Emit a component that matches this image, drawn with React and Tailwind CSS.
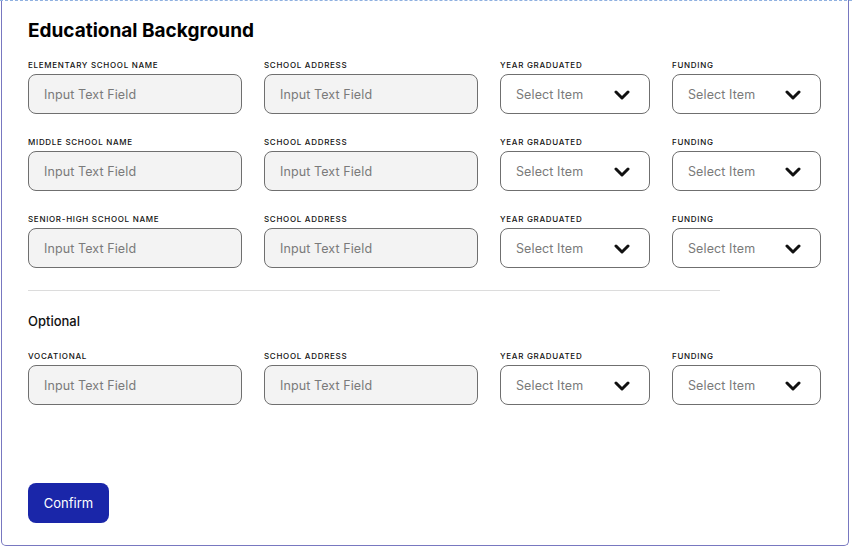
import React from "react";

const font = { fontFamily: "Inter, 'Liberation Sans', sans-serif" };

function Label({ children }) {
  return (
    <div className="h-[10px] text-[8px] leading-[10px] font-medium uppercase tracking-[0.7px] text-[#111] mb-[4px]">
      {children}
    </div>
  );
}

function TextInput({ label }) {
  return (
    <div>
      <Label>{label}</Label>
      <div className="h-[40px] rounded-[8px] border border-[#6f6f6f] bg-[#f3f3f3] flex items-center pl-[15px] pt-[2px] text-[12.5px] text-[#7a7a7a] tracking-[0.1px]">
        Input Text Field
      </div>
    </div>
  );
}

function Chevron() {
  return (
    <svg width="16" height="10" viewBox="0 0 16 10" fill="none">
      <path d="M2 2 L8 8 L14 2" stroke="#111" strokeWidth="3" strokeLinecap="round" strokeLinejoin="round" />
    </svg>
  );
}

function SelectInput({ label }) {
  return (
    <div>
      <Label>{label}</Label>
      <div className="h-[40px] rounded-[8px] border border-[#6f6f6f] bg-white flex items-center justify-between pl-[15px] pr-[19px] pt-[1px] text-[12.5px] text-[#7a7a7a] tracking-[0.1px]">
        <span className="pt-[1px]">Select Item</span>
        <Chevron />
      </div>
    </div>
  );
}

function Row({ first, mb = "mb-[23px]" }) {
  return (
    <div className={`grid grid-cols-[214px_214px_150px_149px] gap-x-[22px] ${mb}`}>
      <TextInput label={first} />
      <TextInput label="School Address" />
      <SelectInput label="Year Graduated" />
      <SelectInput label="Funding" />
    </div>
  );
}

export default function App() {
  return (
    <div className="w-[852px] h-[547px] bg-white relative overflow-hidden" style={font}>
      <div className="absolute left-0 top-0 w-[852px] h-[1px] border-t border-dashed border-[#8fb0e0]" />
      <div className="ml-[1px] w-[848px] h-[546px] border-l border-r border-b border-[#7878c0] rounded-b-[5px] pl-[26px] pt-[18px]">
        <h1 className="text-[19px] leading-[26px] font-bold text-black mb-[16px]">Educational Background</h1>
        <Row first="Elementary School Name" />
        <Row first="Middle School Name" />
        <Row first="Senior-High School Name" mb="mb-[22px]" />
        <div className="w-[692px] h-[1px] bg-[#dcdcdc]" />
        <div className="mt-[22px] text-[13px] leading-[16px] font-medium text-[#111] mb-[22px]">Optional</div>
        <Row first="Vocational" mb="mb-[78px]" />
        <button className="w-[81px] h-[40px] rounded-[8px] bg-[#1a26a9] text-white text-[13px] pt-[1px] flex items-center justify-center">
          Confirm
        </button>
      </div>
    </div>
  );
}
